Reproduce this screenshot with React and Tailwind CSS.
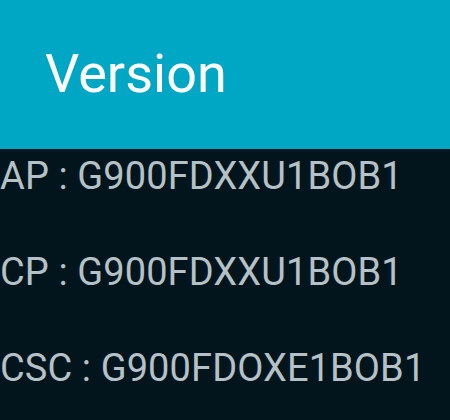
export default function App() {
  const rows = ["AP : G900FDXXU1BOB1", "CP : G900FDXXU1BOB1", "CSC : G900FDOXE1BOB1"];
  return (
    <div className="w-[450px] h-[420px] overflow-hidden bg-[#02151c]" style={{ fontFamily: "Roboto, 'Noto Sans', sans-serif" }}>
      <div className="h-[149px] bg-[#00a7c5] pt-[43px] pl-[45px]">
        <div className="text-[54px] leading-[62px] text-white">Version</div>
      </div>
      <div className="flex flex-col gap-[52px] pt-[5px]">
        {rows.map((r) => (
          <div key={r} className="text-[38px] leading-[44px] tracking-[0.1px] text-[#b5c1c6] whitespace-nowrap">{r}</div>
        ))}
      </div>
    </div>
  );
}
